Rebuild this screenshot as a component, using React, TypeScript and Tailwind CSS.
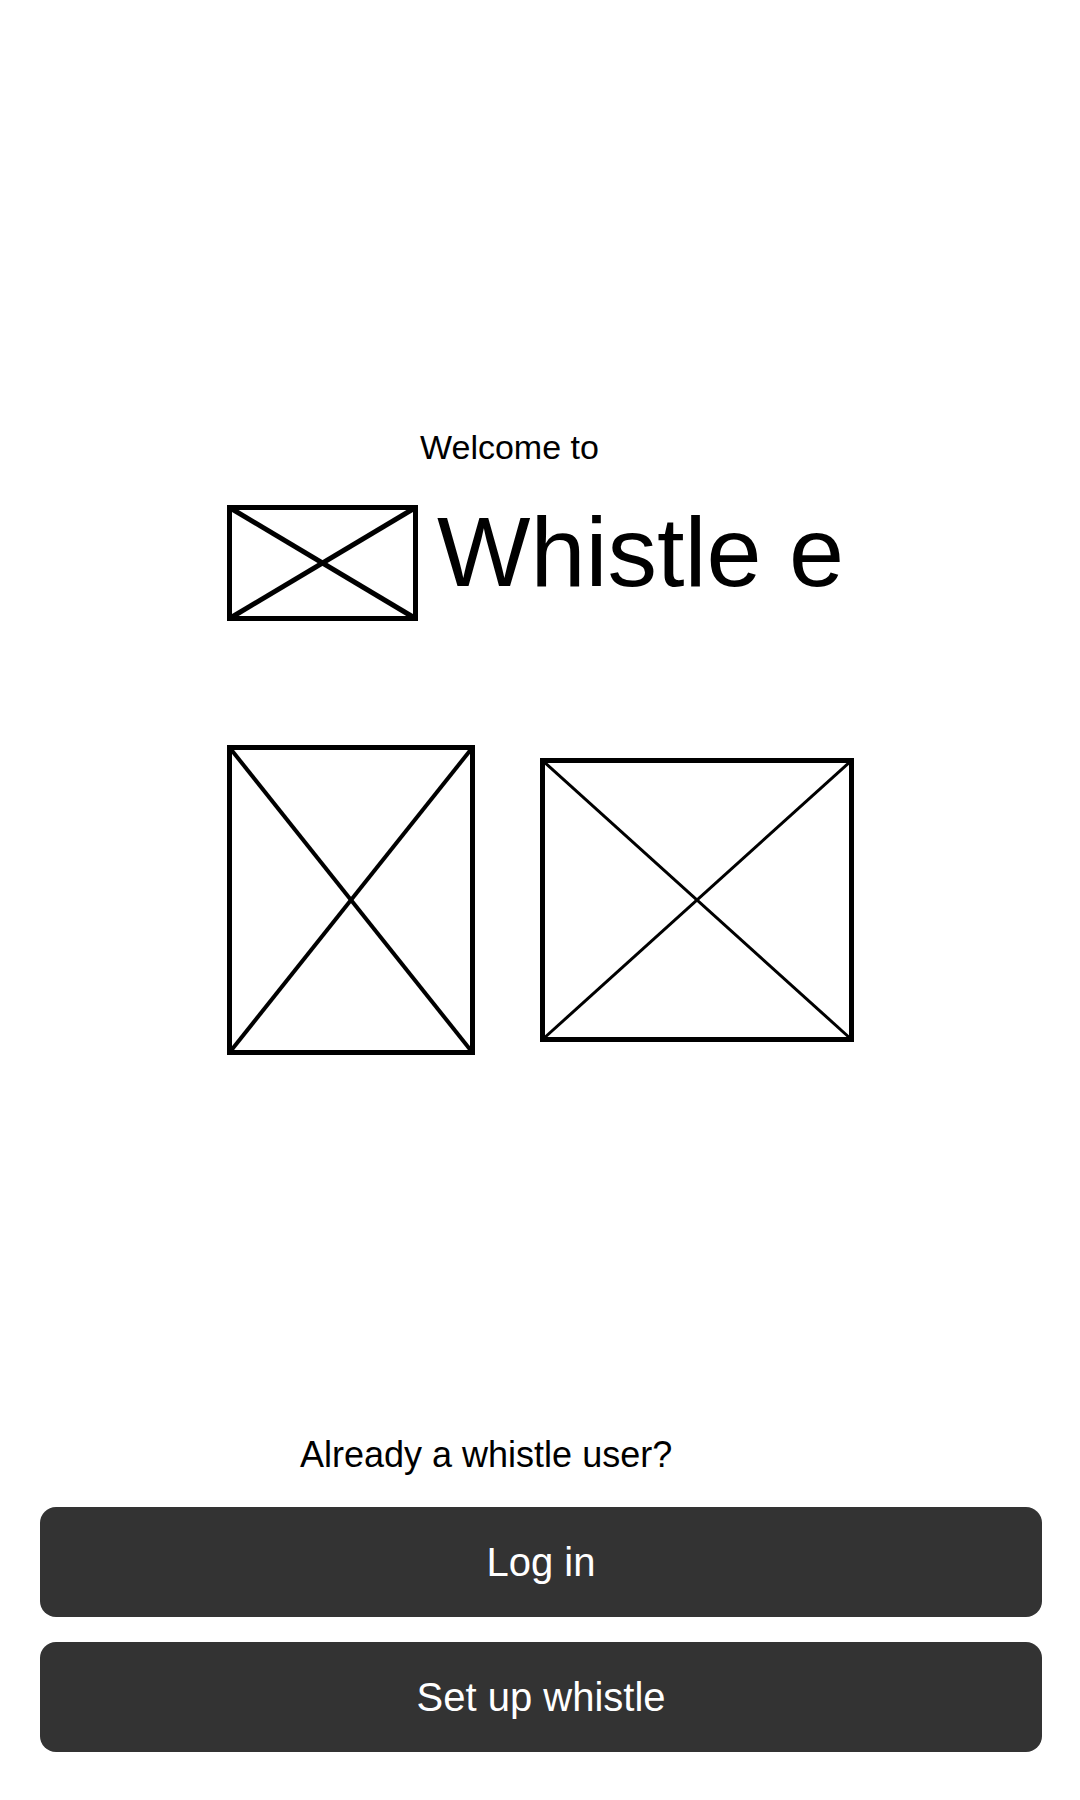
import React from 'react'

interface PlaceholderProps {
    w: number;
    h: number;
    border?: number;
    cross?: number;
}

// crossed-box image placeholder, like a wireframe
const Placeholder = ({ w, h, border = 4, cross = 4 }: PlaceholderProps) => {
    const b = border / 2
    return (
        <svg width={w} height={h} viewBox={`0 0 ${w} ${h}`} className="block shrink-0">
            <line x1={b} y1={b} x2={w - b} y2={h - b} stroke="#000" strokeWidth={cross} />
            <line x1={w - b} y1={b} x2={b} y2={h - b} stroke="#000" strokeWidth={cross} />
            <rect x={b} y={b} width={w - border} height={h - border} fill="none" stroke="#000" strokeWidth={border} />
        </svg>
    )
}

const App = () => {
    return (
        <div className="min-h-[1800px] w-full bg-white text-black flex flex-col font-['Liberation_Sans',Arial,sans-serif]">

            {/* Heading */}
            <p className="pt-[430px] pl-[420px] text-[34px] leading-none">
                Welcome to
            </p>

            {/* Logo + name */}
            <div className="mt-[38px] pl-[227px] flex items-start gap-[19px] h-[118px]">
                <div className="mt-[3px]">
                    <Placeholder w={191} h={116} border={5} cross={5} />
                </div>
                <h1 className="text-[99px] leading-none font-normal">Whistle e</h1>
            </div>

            {/* Images */}
            <div className="mt-[125px] pl-[227px] flex items-center gap-[65px]">
                <Placeholder w={248} h={310} border={5} cross={4} />
                <Placeholder w={314} h={284} border={5} cross={3} />
            </div>

            {/* Bottom */}
            <p className="mt-[382px] pl-[300px] text-[36px] leading-none">
                Already a whistle user?
            </p>

            <div className="mt-[34px] pl-[40px] pr-[38px] flex flex-col gap-[25px]">
                <button
                    type="button"
                    className="h-[110px] w-full rounded-[16px] bg-[#333333] text-white text-[40px] leading-none"
                >
                    Log in
                </button>
                <button
                    type="button"
                    className="h-[110px] w-full rounded-[16px] bg-[#333333] text-white text-[40px] leading-none"
                >
                    Set up whistle
                </button>
            </div>

        </div>
    )
}

export default App
